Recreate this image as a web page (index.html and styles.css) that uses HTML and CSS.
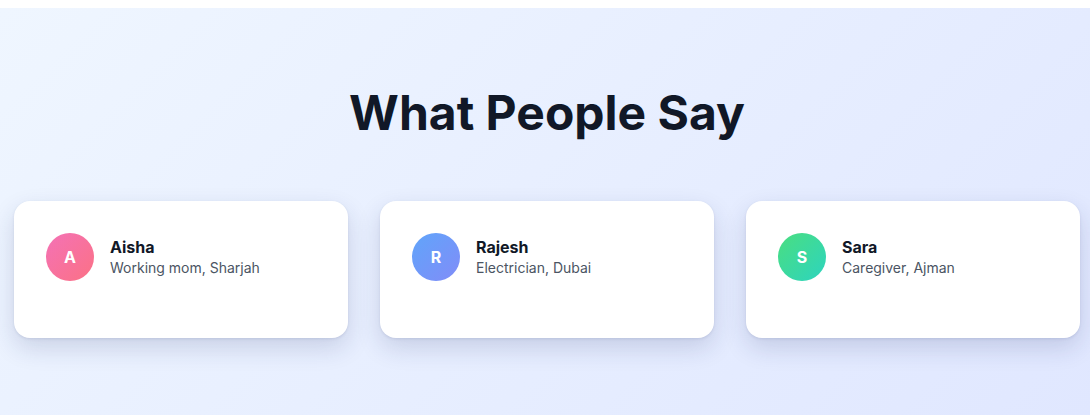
FILE: index.html
```html
<!DOCTYPE html>
<html lang="en">
<head>
<meta charset="utf-8">
<title>What People Say</title>
<link rel="stylesheet" href="styles.css">
</head>
<body>
<section class="testimonials">
  <h2 class="title">What People Say</h2>
  <div class="cards">
    <div class="card">
      <div class="person">
        <div class="avatar avatar-pink">A</div>
        <div class="info">
          <div class="name">Aisha</div>
          <div class="role">Working mom, Sharjah</div>
        </div>
      </div>
    </div>
    <div class="card">
      <div class="person">
        <div class="avatar avatar-blue">R</div>
        <div class="info">
          <div class="name">Rajesh</div>
          <div class="role">Electrician, Dubai</div>
        </div>
      </div>
    </div>
    <div class="card">
      <div class="person">
        <div class="avatar avatar-green">S</div>
        <div class="info">
          <div class="name">Sara</div>
          <div class="role">Caregiver, Ajman</div>
        </div>
      </div>
    </div>
  </div>
</section>
</body>
</html>
```

FILE: styles.css
```css
html, body {
  margin: 0;
  padding: 0;
}
body {
  padding-top: 8px;
  background: #ffffff;
  font-family: Inter, "Noto Sans", sans-serif;
}
.testimonials {
  min-height: 407px;
  box-sizing: border-box;
  background: linear-gradient(135deg, #eff6ff 0%, #e0e7ff 100%);
  padding: 75px 10px 60px 14px;
}
.title {
  margin: 0 0 58px;
  text-align: center;
  font-size: 48px;
  line-height: 60px;
  font-weight: 700;
  color: #111827;
}
.cards {
  display: grid;
  grid-template-columns: repeat(3, 1fr);
  gap: 32px;
}
.card {
  background: #ffffff;
  border-radius: 16px;
  padding: 32px 32px 57px;
  box-shadow: 0 10px 25px rgba(30, 41, 100, 0.16), 0 1px 3px rgba(30, 41, 100, 0.1);
}
.person {
  display: flex;
  align-items: center;
  gap: 16px;
}
.avatar {
  width: 48px;
  height: 48px;
  border-radius: 50%;
  display: flex;
  align-items: center;
  justify-content: center;
  color: #ffffff;
  font-weight: 700;
  font-size: 16px;
  flex-shrink: 0;
}
.avatar-pink { background: linear-gradient(135deg, #f472b6, #fb7185); }
.avatar-blue { background: linear-gradient(135deg, #60a5fa, #818cf8); }
.avatar-green { background: linear-gradient(135deg, #4ade80, #2dd4bf); }
.name {
  font-size: 16px;
  font-weight: 700;
  color: #111827;
  line-height: 22px;
}
.role {
  font-size: 14px;
  color: #4b5563;
  line-height: 20px;
}
```
